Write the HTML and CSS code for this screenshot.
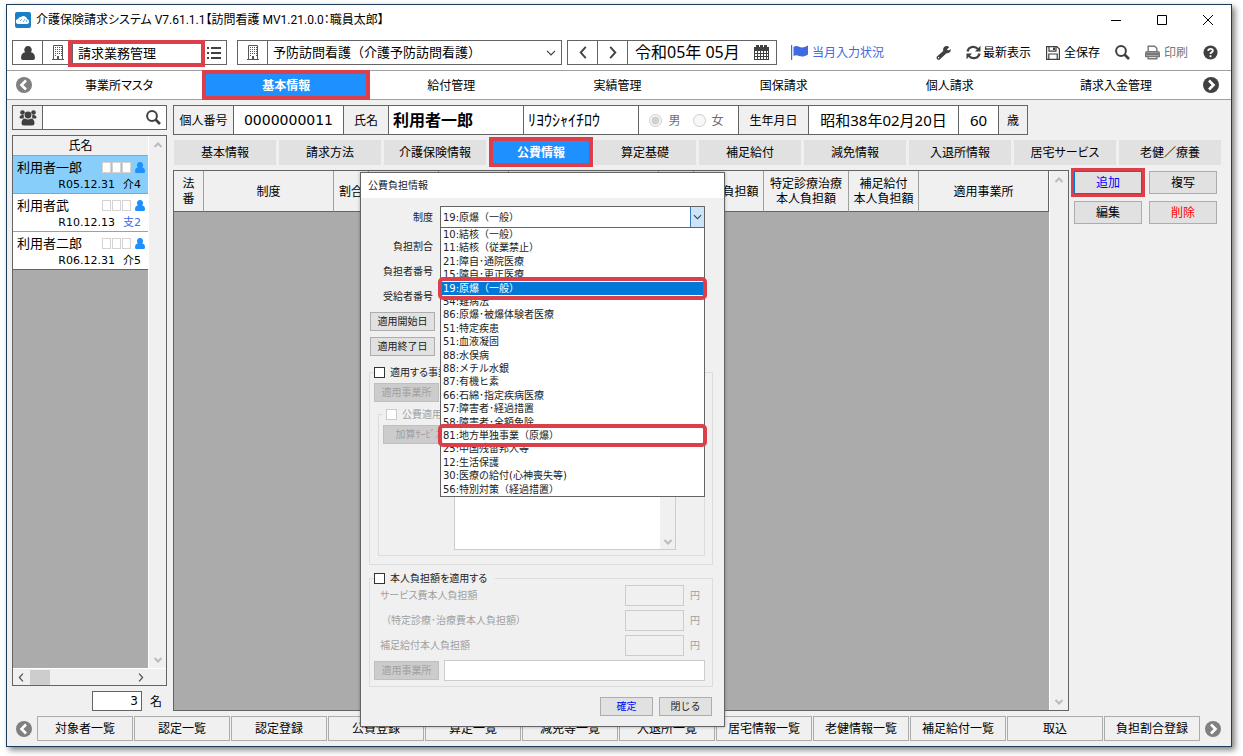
FILE: index.html
```html
<!DOCTYPE html>
<html lang="ja">
<head>
<meta charset="utf-8">
<meta name="viewport" content="width=device-width, initial-scale=1">
<title>介護保険請求システム</title>
<link rel="stylesheet" href="styles.css">
</head>
<body>
<svg class="sprite" aria-hidden="true">
  <symbol id="user" viewBox="0 0 14 14"><path d="M7 0a3.600 3.800 0 0 1 2.800 6.300C12.500 6.800 14 8.500 14 12q0 2-2 2H2q-2 0-2-2c0-3.500 1.500-5.200 4.200-5.700A3.600 3.800 0 0 1 7 0z"/></symbol>
  <symbol id="person" viewBox="0 0 10 11"><path d="M5 0a2.900 3 0 0 1 2 5.300Q10 5.800 10 9.500 10 11 8.500 11h-7Q0 11 0 9.500 0 5.800 3 5.300A2.900 3 0 0 1 5 0z"/></symbol>
  <symbol id="building" viewBox="0 0 12 15"><path fill="none" stroke="currentColor" d="M1.500.5h9v14h-9zM0 14.500h12"/><path d="M3 2h1v1H3zM5 2h1v1H5zM7 2h1v1H7zM9 2h1v1H9zM3 4h1v1H3zM5 4h1v1H5zM7 4h1v1H7zM9 4h1v1H9zM3 6h1v1H3zM5 6h1v1H5zM7 6h1v1H7zM9 6h1v1H9zM3 8h1v1H3zM5 8h1v1H5zM7 8h1v1H7zM9 8h1v1H9zM3 10h1v1H3zM9 10h1v1H9zM5 11h2v3H5z"/></symbol>
  <symbol id="list" viewBox="0 0 14 12"><path d="M0 0h2v2H0zM4 0h10v2H4zM0 5h2v2H0zM4 5h10v2H4zM0 10h2v2H0zM4 10h10v2H4z"/></symbol>
  <symbol id="left" viewBox="0 0 8 14"><path fill="none" stroke="currentColor" stroke-width="2" d="M7 1L1.500 7 7 13"/></symbol>
  <symbol id="right" viewBox="0 0 8 14"><path fill="none" stroke="currentColor" stroke-width="2" d="M1 1l5.500 6L1 13"/></symbol>
  <symbol id="down" viewBox="0 0 10 6"><path fill="none" stroke="currentColor" stroke-width="1.200" d="M1 .8l4 4 4-4"/></symbol>
  <symbol id="up" viewBox="0 0 10 6"><path fill="none" stroke="currentColor" stroke-width="2" d="M1.500 5L5 1.500 8.500 5"/></symbol>
  <symbol id="calendar" viewBox="0 0 15 15"><path fill-rule="evenodd" d="M0 2h2V0h3v2h1V0h3v2h1V0h3v2h2v13H0zM1 6v2h2V6zm3 0v2h2V6zm3 0v2h2V6zm3 0v2h2V6zm3 0v2h1V6zM1 9v2h2V9zm3 0v2h2V9zm3 0v2h2V9zm3 0v2h2V9zm3 0v2h1V9zM1 12v2h2v-2zm3 0v2h2v-2zm3 0v2h2v-2zm3 0v2h2v-2zm3 0v2h1v-2z"/></symbol>
  <symbol id="flag" viewBox="0 0 17 15"><path d="M0 0h1.200v15H0zM2.500 2C6-.5 8 2.500 11 2.500c2 0 3.500-1 6-2v9c-2.500 1.500-4 2-6 2-3 0-5-2.500-8.500-.5z"/></symbol>
  <symbol id="wrench" viewBox="0 0 15 15"><path fill-rule="evenodd" d="M13.200 2.200L11 4.200l1 1.200 2.800-1.200c.3 2.600-1.600 4.300-4.300 4L4 14.300c-1.800 1.700-4.600-.8-3-2.800l6.200-5.600C6.500 3 8.800.4 12 1.200zM2 12v1.200h1.200V12z"/></symbol>
  <symbol id="refresh" viewBox="0 0 15 15"><path fill="none" stroke="currentColor" stroke-width="2.200" d="M1.500 6.500C2.500 1.500 8.500.3 12 4M13.500 8.500c-1 5-7 6.200-10.500 2.500"/><path d="M14.500.8V6.500H9zM.5 14.200V8.500H6z"/></symbol>
  <symbol id="save" viewBox="0 0 14 14"><path fill="none" stroke="currentColor" stroke-width="1.200" d="M.6.6h10.300l2.500 2.500v10.300H.6zM3 .6v4.500h7V.6M2.800 13.400V8h8.400v5.400"/><path d="M7 1.500h2V4H7z"/></symbol>
  <symbol id="search" viewBox="0 0 15 15"><circle cx="6" cy="6" r="4.900" fill="none" stroke="currentColor" stroke-width="2"/><path stroke="currentColor" stroke-width="2.600" d="M9.500 9.500l4.500 4.500"/></symbol>
  <symbol id="printer" viewBox="0 0 15 14"><path fill="none" stroke="currentColor" stroke-width="1.400" d="M3.200 7V.7h6.500l2.100 2V7M3.200 10v3.300h8.600V10M.7 11V7.500q0-1.300 1.300-1.300h11q1.300 0 1.300 1.300V11z"/><path d="M1 7h13v3H1z"/></symbol>
  <symbol id="help" viewBox="0 0 16 16"><circle cx="8" cy="8" r="7.500"/><path fill="none" stroke="#fff" stroke-width="2" d="M5.500 6.300c.3-3 5-2.700 5-.1C10.500 8 8 7.600 8 9.500"/><path fill="#fff" d="M7 11h2v2H7z"/></symbol>
  <symbol id="circle-left" viewBox="0 0 16 16"><circle cx="8" cy="8" r="8"/><path fill="none" stroke="#fff" stroke-width="2.600" d="M10 3.500L5.500 8l4.500 4.500"/></symbol>
  <symbol id="circle-right" viewBox="0 0 16 16"><circle cx="8" cy="8" r="8"/><path fill="none" stroke="#fff" stroke-width="2.600" d="M6 3.500L10.500 8 6 12.500"/></symbol>
  <symbol id="users" viewBox="0 0 18 16"><circle cx="3.500" cy="2.500" r="2.300"/><circle cx="14.500" cy="2.500" r="2.300"/><path d="M.5 8Q.5 5 3.500 5h1.300v3.500H1.500zM17.500 8q0-3-3-3h-1.300v3.500h3.300z"/><circle cx="9" cy="5" r="3.400"/><path d="M2.500 13q0-4 3.500-4.500Q9 10.500 12 8.500q3.500.5 3.500 4.500 0 2.500-2.500 2.500H5Q2.500 15.500 2.500 13z"/></symbol>
</svg>

<div class="window">
  <header class="titlebar">
    <svg class="app-icon" viewBox="0 0 16 16"><rect width="16" height="16" rx="2" fill="#1b7fc8"/><path fill="#fff" d="M3.500 12a2.500 2.500 0 0 1-.3-5A2.500 2.500 0 0 1 6 5a3.600 3.600 0 0 1 6 2 2.600 2.600 0 0 1 .5 5z"/><path stroke="#62aee0" d="M5 9l2-2M8 10l2-3M11 10l1-2"/></svg>
    <h1 class="app-title">介護保険請求システム V7.61.1.1【訪問看護 MV1.21.0.0：職員太郎】</h1>
    <div class="window-controls">
      <button class="win-btn" aria-label="最小化"><svg viewBox="0 0 12 12"><path d="M1 6.500h10"/></svg></button>
      <button class="win-btn" aria-label="最大化"><svg viewBox="0 0 12 12"><path d="M1.500 1.500h9v9h-9z"/></svg></button>
      <button class="win-btn" aria-label="閉じる"><svg viewBox="0 0 12 12"><path d="M1 1l10 10M11 1L1 11"/></svg></button>
    </div>
  </header>

  <div class="toolbar">
    <div class="group menu-group">
      <button class="cell icon-cell" aria-label="利用者"><svg class="i14"><use href="#user"/></svg></button>
      <button class="cell icon-cell" aria-label="事業所"><svg class="i-building"><use href="#building"/></svg></button>
      <label class="cell menu-field marked"><input class="menu-input" type="text" value="請求業務管理" aria-label="業務"></label>
      <button class="cell list-cell" aria-label="一覧"><svg class="i-list"><use href="#list"/></svg></button>
    </div>
    <div class="group service-group">
      <button class="cell icon-cell" aria-label="事業所選択"><svg class="i-building"><use href="#building"/></svg></button>
      <label class="cell select-cell"><select class="service-select" aria-label="サービス"><option>予防訪問看護（介護予防訪問看護）</option></select><svg class="i-down"><use href="#down"/></svg></label>
    </div>
    <div class="group date-group">
      <button class="cell icon-cell" aria-label="前月"><svg class="i-arrow"><use href="#left"/></svg></button>
      <button class="cell icon-cell" aria-label="翌月"><svg class="i-arrow"><use href="#right"/></svg></button>
      <button class="cell date-cell"><span>令和05年 05月</span><svg class="i15"><use href="#calendar"/></svg></button>
    </div>
    <button class="tool status"><svg class="i-flag"><use href="#flag"/></svg>当月入力状況</button>
    <div class="tools">
      <button class="tool" aria-label="設定"><svg class="i15"><use href="#wrench"/></svg></button>
      <button class="tool tight"><svg class="i15"><use href="#refresh"/></svg><span>最新表示</span></button>
      <button class="tool"><svg class="i14"><use href="#save"/></svg><span>全保存</span></button>
      <button class="tool" aria-label="検索"><svg class="i15"><use href="#search"/></svg></button>
      <button class="tool muted"><svg class="i15"><use href="#printer"/></svg><span>印刷</span></button>
      <button class="tool" aria-label="ヘルプ"><svg class="i15"><use href="#help"/></svg></button>
    </div>
  </div>

  <nav class="main-nav">
    <button class="round grey" aria-label="前へ"><svg class="i16"><use href="#circle-left"/></svg></button>
    <div class="nav-tabs">
      <button class="nav-tab">事業所マスタ</button>
      <button class="nav-tab active">基本情報</button>
      <button class="nav-tab">給付管理</button>
      <button class="nav-tab">実績管理</button>
      <button class="nav-tab">国保請求</button>
      <button class="nav-tab">個人請求</button>
      <button class="nav-tab">請求入金管理</button>
    </div>
    <button class="round" aria-label="次へ"><svg class="i16"><use href="#circle-right"/></svg></button>
  </nav>

  <div class="workspace">
    <aside class="sidebar">
      <div class="group search-group">
        <button class="cell icon-cell shaded" aria-label="利用者グループ"><svg class="i-users"><use href="#users"/></svg></button>
        <label class="cell search-cell"><input class="search-input" type="text" aria-label="利用者検索"><svg class="i15"><use href="#search"/></svg></label>
      </div>
      <div class="client-list">
        <div class="list-main">
          <div class="list-head">氏名</div>
          <div class="client selected">
            <div class="client-top"><span class="client-name">利用者一郎</span><i class="box"></i><i class="box"></i><i class="box"></i><svg class="i-person"><use href="#person"/></svg></div>
            <div class="client-sub"><span>R05.12.31</span><span>介4</span></div>
          </div>
          <div class="client">
            <div class="client-top"><span class="client-name">利用者武</span><i class="box"></i><i class="box"></i><i class="box"></i><svg class="i-person"><use href="#person"/></svg></div>
            <div class="client-sub"><span>R10.12.13</span><span class="blue">支2</span></div>
          </div>
          <div class="client">
            <div class="client-top"><span class="client-name">利用者二郎</span><i class="box"></i><i class="box"></i><i class="box"></i><svg class="i-person"><use href="#person"/></svg></div>
            <div class="client-sub"><span>R06.12.31</span><span>介5</span></div>
          </div>
        </div>
        <div class="vscroll"><svg class="i-scroll"><use href="#up"/></svg><svg class="i-scroll flip"><use href="#up"/></svg></div>
        <div class="hscroll"><svg class="i-hs"><use href="#left"/></svg><span class="thumb"></span><svg class="i-hs end"><use href="#right"/></svg></div>
      </div>
      <div class="count-row"><input class="count" id="count" type="text" value="3"><label for="count">名</label></div>
    </aside>

    <main class="content">
      <div class="group person-bar">
        <span class="cell shaded w60">個人番号</span>
        <span class="cell number w110">0000000011</span>
        <span class="cell shaded w45">氏名</span>
        <span class="cell full-name w135">利用者一郎</span>
        <span class="cell kana w115">ﾘﾖｳｼｬｲﾁﾛｳ</span>
        <span class="cell gender w100"><label class="radio"><input type="radio" name="sex" checked disabled>男</label><label class="radio"><input type="radio" name="sex" disabled>女</label></span>
        <span class="cell shaded w70">生年月日</span>
        <span class="cell birth w150">昭和38年02月20日</span>
        <span class="cell birth w40">60</span>
        <span class="cell shaded w28">歳</span>
      </div>
      <div class="sub-tabs">
        <button class="sub-tab">基本情報</button>
        <button class="sub-tab">請求方法</button>
        <button class="sub-tab">介護保険情報</button>
        <button class="sub-tab active">公費情報</button>
        <button class="sub-tab">算定基礎</button>
        <button class="sub-tab">補足給付</button>
        <button class="sub-tab">減免情報</button>
        <button class="sub-tab">入退所情報</button>
        <button class="sub-tab">居宅サービス</button>
        <button class="sub-tab">老健／療養</button>
      </div>
      <div class="detail">
        <div class="grid-box">
          <div class="grid-area">
            <table class="grid">
              <colgroup><col class="c30"><col class="c130"><col class="c35"><col class="c70"><col class="c70"><col class="c150"><col class="c35"><col class="c70"><col class="c85"><col class="c70"><col class="c130"></colgroup>
              <thead><tr><th>法<br>番</th><th>制度</th><th>割合</th><th></th><th></th><th></th><th></th><th>本人負担額</th><th>特定診療治療<br>本人負担額</th><th>補足給付<br>本人負担額</th><th>適用事業所</th></tr></thead>
            </table>
          </div>
          <div class="vscroll wide"><svg class="i-scroll"><use href="#up"/></svg><svg class="i-scroll flip"><use href="#up"/></svg></div>
        </div>
        <div class="actions">
          <button class="action primary">追加</button>
          <button class="action">複写</button>
          <button class="action">編集</button>
          <button class="action danger">削除</button>
        </div>
      </div>
    </main>
  </div>

  <footer class="bottom-bar">
    <button class="round grey" aria-label="前へ"><svg class="i16"><use href="#circle-left"/></svg></button>
    <div class="bottom-tabs">
      <button class="bottom-tab">対象者一覧</button>
      <button class="bottom-tab">認定一覧</button>
      <button class="bottom-tab">認定登録</button>
      <button class="bottom-tab">公費登録</button>
      <button class="bottom-tab">算定一覧</button>
      <button class="bottom-tab">減免等一覧</button>
      <button class="bottom-tab">入退所一覧</button>
      <button class="bottom-tab">居宅情報一覧</button>
      <button class="bottom-tab">老健情報一覧</button>
      <button class="bottom-tab">補足給付一覧</button>
      <button class="bottom-tab">取込</button>
      <button class="bottom-tab">負担割合登録</button>
    </div>
    <button class="round grey" aria-label="次へ"><svg class="i16"><use href="#circle-right"/></svg></button>
  </footer>

  <section class="dialog" role="dialog" aria-labelledby="dlg-title">
    <h2 class="dialog-title" id="dlg-title">公費負担情報</h2>
    <div class="dialog-body">
      <div class="form-rows">
        <label class="form-label" for="scheme">制度</label>
        <div class="combo">
          <select class="combo-select" id="scheme"><option>19:原爆（一般）</option></select>
          <span class="combo-arrow"><svg class="i-combo"><use href="#down"/></svg></span>
          <ul class="options" role="listbox">
            <li>10:結核（一般）</li><li>11:結核（従業禁止）</li><li>21:障自･通院医療</li><li>15:障自･更正医療</li>
            <li class="current boxed">19:原爆（一般）</li>
            <li>54:難病法</li><li>86:原爆･被爆体験者医療</li><li>51:特定疾患</li><li>51:血液凝固</li><li>88:水俣病</li><li>88:メチル水銀</li><li>87:有機ヒ素</li><li>66:石綿･指定疾病医療</li><li>57:障害者･経過措置</li><li>58:障害者･全額免除</li>
            <li class="boxed">81:地方単独事業（原爆）</li>
            <li>25:中国残留邦人等</li><li>12:生活保護</li><li>30:医療の給付(心神喪失等)</li><li>56:特別対策（経過措置）</li>
          </ul>
        </div>
        <span class="form-label second">負担割合</span>
        <span class="form-label second">負担者番号</span>
        <span class="form-label second">受給者番号</span>
      </div>
      <div class="date-buttons">
        <button class="dlg-btn">適用開始日</button>
        <button class="dlg-btn">適用終了日</button>
      </div>
      <fieldset class="panel office-panel">
        <legend><label class="check"><input type="checkbox">適用する事業</label></legend>
        <button class="dlg-btn off" disabled>適用事業所</button>
        <fieldset class="panel inner-panel">
          <legend><label class="check off-text"><input type="checkbox" disabled>公費適用</label></legend>
          <button class="dlg-btn off" disabled>加算ｻｰﾋﾞｽ</button>
          <div class="memo"><textarea class="memo-text" aria-label="加算サービス" disabled></textarea><span class="memo-scroll"><svg class="i-scroll flip"><use href="#up"/></svg></span></div>
        </fieldset>
      </fieldset>
      <fieldset class="panel cost-panel">
        <legend><label class="check"><input type="checkbox">本人負担額を適用する</label></legend>
        <div class="cost-row"><label for="cost1">サービス費本人負担額</label><input class="amount" id="cost1" type="text" disabled><span>円</span></div>
        <div class="cost-row"><label for="cost2" class="indent">（特定診療･治療費本人負担額）</label><input class="amount" id="cost2" type="text" disabled><span>円</span></div>
        <div class="cost-row"><label for="cost3">補足給付本人負担額</label><input class="amount" id="cost3" type="text" disabled><span>円</span></div>
        <div class="office-row"><button class="dlg-btn off" disabled>適用事業所</button><input class="office" type="text" aria-label="適用事業所"></div>
      </fieldset>
      <div class="dialog-actions">
        <button class="dlg-btn confirm">確定</button>
        <button class="dlg-btn">閉じる</button>
      </div>
    </div>
  </section>
</div>
</body>
</html>
```

FILE: styles.css
```css
:root {
  --ui: "Noto Sans", "Noto Sans CJK JP", sans-serif;
  --wide: "DejaVu Sans", "Noto Sans CJK JP", sans-serif;
  --line: #646464;
  --panel: #f0f0f0;
  --red: #dc3f4a;
  --blue: #1e90ff;
  --ink: #404040;
}

* { box-sizing: border-box; }

body {
  margin: 0;
  padding: 4px 11px 9px 6px;
  min-height: 100vh;
  display: flex;
  background: #fff;
  color: #000;
  font: 12px/15px var(--ui);
}

button, input, select, textarea { font: inherit; color: inherit; margin: 0; }
button { border: 0; padding: 0; background: none; white-space: nowrap; }
svg { display: block; fill: currentColor; flex: none; }
.sprite { position: absolute; width: 0; height: 0; }

.i14 { width: 14px; height: 14px; }
.i15 { width: 15px; height: 15px; }
.i16 { width: 16px; height: 16px; }
.i-building { width: 12px; height: 15px; color: #555; }
.i-list { width: 14px; height: 12px; }
.i-arrow { width: 8px; height: 13px; }
.i-down { width: 10px; height: 6px; }
.i-flag { width: 17px; height: 15px; }
.i-users { width: 18px; height: 16px; }
.i-person { width: 10px; height: 11px; color: var(--blue); margin-left: 3px; }
.i-scroll { width: 10px; height: 6px; color: #bbb; }
.i-hs { width: 6px; height: 9px; color: #555; }
.i-combo { width: 9px; height: 6px; color: #444; }
.flip { transform: rotate(180deg); }

.window {
  position: relative;
  flex: 1;
  min-width: 0;
  display: flex;
  flex-direction: column;
  border: 1px solid #1c3c5a;
  background: var(--panel);
  box-shadow: 3px 3px 6px rgba(0, 0, 0, .5);
}

/* Title bar */
.titlebar { display: flex; align-items: center; gap: 5px; height: 30px; padding-left: 8px; background: #fff; }
.app-icon { width: 16px; height: 16px; }
.app-title { margin: 0; font-family: Roboto, "Noto Sans CJK JP", sans-serif; font-size: 12px; font-weight: 400; font-feature-settings: "palt"; }
.window-controls { display: flex; margin-left: auto; }
.win-btn { display: grid; place-items: center; width: 46px; height: 28px; }
.win-btn svg { width: 12px; height: 12px; fill: none; stroke: #000; }

/* Toolbar */
.toolbar { display: flex; align-items: center; height: 35px; padding: 0 13px 0 5px; background: #fff; color: var(--ink); }
.group { display: flex; height: 25px; border: 1px solid var(--line); background: #fff; }
.cell { display: flex; align-items: center; justify-content: center; border-left: 1px solid var(--line); white-space: nowrap; }
.cell:first-child { border-left: 0; }
.icon-cell { width: 30px; color: var(--ink); }
.icon-cell:first-child { width: 29px; }
.shaded { background: var(--panel); }
.menu-group { width: 215px; }
.menu-field { position: relative; flex: 1; min-width: 0; }
.menu-input { width: 100%; height: 100%; border: 0; padding: 0 5px; background: none; color: #000; font-size: 13px; }
.marked::after { content: ""; position: absolute; inset: -1px -4px -3px -5px; border: 4px solid var(--red); pointer-events: none; }
.list-cell { width: 25px; border-left: 0; }
.service-group { width: 325px; margin-left: 10px; }
.select-cell { flex: 1; min-width: 0; padding-right: 5px; }
.service-select { flex: 1; min-width: 0; height: 100%; border: 0; padding: 0 5px; appearance: none; background: none; color: #000; font-size: 13px; }
.date-group { width: 210px; margin-left: 5px; }
.date-cell { flex: 1; justify-content: space-between; padding: 0 7px; font-size: 16px; }
.date-cell span { color: #000; }
.tool { display: flex; align-items: center; gap: 4px; color: var(--ink); }
.tool span { color: #000; }
.tight { gap: 2px; }
.muted, .muted span { color: #777; }
.status { margin-left: 14px; color: #4169e1; }
.tools { display: flex; gap: 15px; margin-left: auto; }

/* Main navigation */
.main-nav { display: flex; align-items: center; gap: 4px; height: 30px; padding: 0 12px 0 9px; border-top: 1px solid #a0a0a0; border-bottom: 1px solid #a0a0a0; background: #fff; }
.round { color: var(--ink); }
.round.grey { color: #808080; }
.nav-tabs { flex: 1; display: grid; grid-template-columns: repeat(7, 1fr); height: 30px; }
.nav-tab { font-feature-settings: "palt"; }
.active { background: var(--blue); border: 4px solid var(--red); color: #fff; font-weight: 700; }
.nav-tab.active { margin: 0 -2px 0 0; }

/* Workspace */
.workspace { flex: 1; display: grid; grid-template-columns: 155px minmax(0, 1fr); gap: 6px; padding: 5px 10px 0 5px; }
.sidebar { display: flex; flex-direction: column; gap: 5px; }
.search-cell { flex: 1; min-width: 0; padding-right: 5px; color: var(--ink); }
.search-input { flex: 1; min-width: 0; height: 100%; border: 0; padding: 0 4px; background: none; }
.client-list { flex: 1; display: grid; grid-template: minmax(0, 1fr) 17px / minmax(0, 1fr) 18px; border: 1px solid var(--line); }
.list-main { background: #ababab; }
.list-head { height: 20px; line-height: 19px; text-align: center; background: var(--panel); border-bottom: 1px solid #a0a0a0; }
.client { height: 38px; padding: 2px 3px 0 4px; background: #fff; border-bottom: 1px solid #a0a0a0; }
.client:last-child { border-color: var(--line); }
.client.selected { background: #87cefa; }
.client-top { display: flex; align-items: center; gap: 1px; height: 18px; font-size: 13px; }
.client-name { margin-right: auto; }
.box { width: 9px; height: 11px; border: 1px solid #d3d3d3; background: #fff; }
.client-sub { display: flex; justify-content: flex-end; gap: 8px; padding-right: 4px; font: 11px/18px var(--wide); }
.blue { color: #4169e1; }
.vscroll { display: flex; flex-direction: column; align-items: center; justify-content: space-between; padding: 6px 0 5px; border-left: 1px solid #fff; background: var(--panel); }
.hscroll { grid-column: 1 / -1; display: flex; align-items: center; gap: 6px; padding: 0 22px 0 5px; border-top: 1px solid #fff; background: var(--panel); }
.thumb { width: 20px; height: 15px; background: #cdcdcd; }
.end { margin-left: auto; }
.count-row { display: flex; align-items: center; justify-content: flex-end; gap: 8px; height: 20px; padding-right: 5px; }
.count { width: 50px; height: 20px; padding: 0 3px; border: 1px solid var(--line); background: #fff; text-align: right; font-family: var(--wide); }

.content { display: flex; flex-direction: column; gap: 5px; min-width: 0; }
.person-bar { height: 30px; align-self: flex-start; }
.w28 { width: 29px; }
.w40 { width: 40px; }
.w45 { width: 45px; }
.w60 { width: 59px; }
.w70 { width: 70px; }
.w100 { width: 100px; }
.w110 { width: 110px; }
.w115 { width: 115px; }
.w135 { width: 135px; }
.w150 { width: 150px; }
.number { font: 14px/20px var(--wide); }
.full-name { justify-content: flex-start; padding-left: 4px; font-size: 16px; font-weight: 700; }
.kana { justify-content: flex-start; padding-left: 4px; font-size: 16px; }
.birth { font-size: 15px; }
.gender { gap: 12px; padding-right: 4px; color: #6d6d6d; }
.radio { display: flex; align-items: center; gap: 6px; }
.radio input { width: 13px; height: 13px; }

.sub-tabs { display: grid; grid-template-columns: repeat(10, 1fr); gap: 3px; height: 25px; padding-left: 1px; }
.sub-tab { background: #e1e1e1; font-feature-settings: "palt"; }
.sub-tab.active { margin: -3px -2px -2px 0; background: var(--blue); border: 4px solid var(--red); }

.detail { flex: 1; display: flex; gap: 5px; }
.grid-box { flex: 1; min-width: 0; display: flex; border: 1px solid var(--line); }
.grid-area { flex: 1; min-width: 0; background: #ababab; }
.wide { width: 19px; }
.grid { width: 100%; table-layout: fixed; border-collapse: separate; border-spacing: 0; background: var(--panel); }
.grid th { height: 41px; padding: 0; border-right: 1px solid #a0a0a0; border-bottom: 1px solid var(--line); font-weight: 400; line-height: 15px; white-space: nowrap; }
.grid th:last-child { border-right: 1px solid var(--line); }
.c30 { width: 30px; }
.c35 { width: 35px; }
.c70 { width: 70px; }
.c85 { width: 85px; }
.c130 { width: 130px; }
.c150 { width: 150px; }

.actions { display: grid; grid-template-columns: 68px 68px; grid-auto-rows: 23px; gap: 7px; align-content: start; margin-right: 4px; padding-top: 1px; }
.action { border: 1px solid #adadad; background: #e1e1e1; }
.primary { border-color: #0078d7; color: #00f; outline: 3px solid var(--red); }
.danger { color: #f00; }

/* Bottom bar */
.bottom-bar { display: flex; align-items: center; gap: 5px; height: 35px; padding: 0 10px 0 9px; }
.bottom-tabs { flex: 1; display: grid; grid-template-columns: repeat(12, 1fr); gap: 1px; }
.bottom-tab { height: 25px; border: 1px solid #adadad; background: var(--panel); }

/* Dialog */
.dialog { position: absolute; left: 353px; top: 167px; width: 365px; border: 1px solid var(--line); background: var(--panel); font: 10px/13px var(--wide); box-shadow: 0 0 3px rgba(0, 0, 0, .3); color: #222; }
.dialog-title { margin: 0; height: 25px; padding-left: 7px; background: #fff; font-size: 10px; font-weight: 400; line-height: 25px; }
.dialog-body { padding: 8px 11px 10px 8px; }
.form-rows { display: grid; grid-template-columns: 64px 265px; column-gap: 7px; grid-template-rows: 22px 31px 25px 25px; }
.form-label { grid-column: 1; align-self: center; text-align: right; }
.second { align-self: end; padding-bottom: 6px; }
.combo { position: relative; display: flex; border: 1px solid var(--line); background: #fff; }
.combo-select { flex: 1; min-width: 0; border: 0; padding: 0 2px; appearance: none; background: none; }
.combo-arrow { display: grid; place-items: center; width: 14px; border-left: 1px solid #3a7ab8; background: #cce4f7; }
.options { position: absolute; z-index: 2; top: 20px; left: -1px; right: -1px; height: 270px; margin: 0; padding: 0; display: grid; grid-template-rows: repeat(20, minmax(0, 1fr)); list-style: none; border: 1px solid var(--line); background: #fff; }
.options li { padding-left: 2px; white-space: nowrap; }
.current { background: #0078d7; color: #fff; }
.boxed { position: relative; z-index: 1; }
.boxed::after { content: ""; position: absolute; inset: -5px -3px; border: 4px solid var(--red); border-radius: 5px; }
.date-buttons { display: grid; gap: 6px; width: 65px; margin: 3px 0 0 1px; }
.dlg-btn { height: 19px; border: 1px solid #adadad; background: #e1e1e1; }
.off { border-color: #bfbfbf; background: #ccc; color: #a0a0a0; }
.panel { position: relative; min-width: 0; margin: 0; padding: 0; border: 1px solid #dcdcdc; }
.panel legend { padding: 0 8px 0 0; }
.check { display: flex; align-items: center; gap: 5px; height: 14px; white-space: nowrap; font-feature-settings: "palt"; }
.check input { appearance: none; width: 11px; height: 11px; border: 1px solid #333; background: #fff; }
.check input:disabled { border-color: #ccc; }
.office-panel { margin-top: 9px; height: 200px; padding: 4px 7px 0 4px; }
.office-panel > .dlg-btn { width: 65px; display: block; }
.inner-panel { margin: 5px 0 0 4px; height: 149px; padding: 4px 28px 5px 4px; display: flex; flex-direction: column; }
.inner-panel legend { padding-left: 3px; }
.inner-panel .dlg-btn { width: 70px; display: block; }
.memo { display: flex; height: 100px; margin-left: 71px; margin-top: 6px; border: 1px solid #ccc; background: #fff; }
.memo-text { flex: 1; min-width: 0; border: 0; padding: 2px; background: none; resize: none; }
.memo-scroll { display: flex; align-items: flex-end; justify-content: center; width: 15px; padding-bottom: 4px; background: var(--panel); }
.cost-panel { margin-top: 6px; padding: 0 7px 5px 4px; color: #a0a0a0; }
.check { color: #222; }
.off-text { color: #a0a0a0; }
.cost-row { display: flex; align-items: center; gap: 6px; height: 21px; margin-bottom: 4px; padding: 0 5px 0 6px; font-feature-settings: "palt"; }
.cost-row label { margin-right: auto; }
.cost-row .indent { padding-left: 6px; }
.amount { width: 59px; height: 21px; border: 1px solid #ccc; background: var(--panel); }
.office-row { display: flex; align-items: center; gap: 5px; }
.office-row .dlg-btn { width: 65px; }
.office { flex: 1; min-width: 0; height: 21px; border: 1px solid #ccc; background: #fff; }
.dialog-actions { display: flex; justify-content: flex-end; gap: 6px; margin-top: 10px; padding-right: 1px; }
.dialog-actions .dlg-btn { width: 53px; }
.confirm { color: #00f; }
```
